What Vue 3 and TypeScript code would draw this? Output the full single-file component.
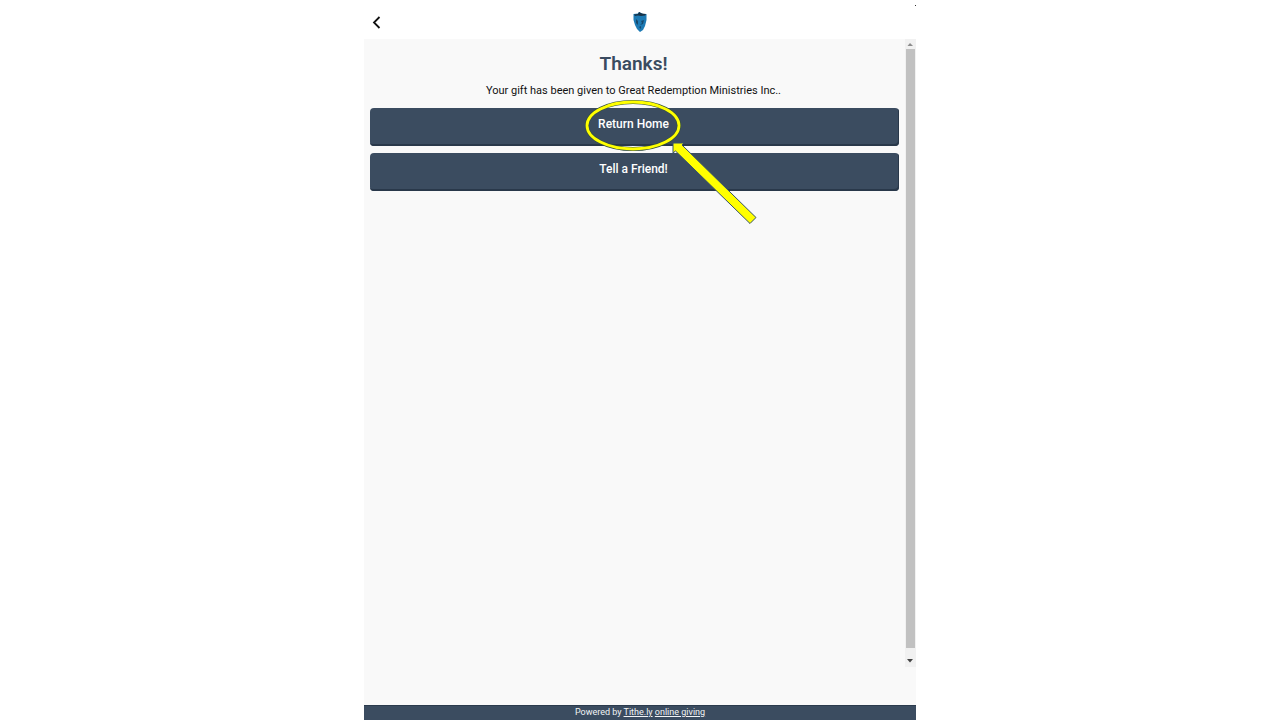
<script setup lang="ts">
const recipient: string = 'Great Redemption Ministries Inc.'
</script>

<template>
  <div class="panel">
    <header class="topbar">
      <button class="back" type="button" aria-label="Back">
        <svg width="10" height="14" viewBox="0 0 10 14"><path d="M7.500 2 L2 7.500 L7.500 13" fill="none" stroke="#111" stroke-width="1.800" /></svg>
      </button>
      <svg class="logo" width="14" height="20" viewBox="0 0 14 20">
        <path d="M0.500 2 L5 1.500 L6 0 L8 1 L10 2 L13.500 2 L13.500 8 L12 14 L10 18 L7 20 L4 17 L2 13 L0.500 8 Z" fill="#1d7ab4" />
        <path d="M1 2.500 L5 2 L6 0 L9 1.500 L13 2 L12 3.500 L8 4 L5 3.500 L2 4 Z" fill="#173348" />
        <path d="M3 7 L5 9 L5 13 L3 11 Z M8 9 L11 8 L10 12 L7 13 L9 11 Z M6 15 L8 14 L8 17 Z" fill="#17496d" />
      </svg>
      <i class="speck"></i>
    </header>

    <div class="body">
      <main class="content">
        <h1>Thanks!</h1>
        <p>Your gift has been given to {{ recipient }}.</p>
        <div class="highlighted">
          <button class="action" type="button">Return Home</button>
          <svg class="marker" width="172" height="128" viewBox="0 0 172 128" aria-hidden="true">
            <ellipse cx="49" cy="25.500" rx="46" ry="23.500" fill="none" stroke="#34503c" stroke-width="4" />
            <ellipse cx="49" cy="25.500" rx="46" ry="23.500" fill="none" stroke="#ffff00" stroke-width="2.800" />
            <path d="M89 43 L100 43 L98 45 L172 117.500 L166 123.500 L91.500 51 L89 53 Z" fill="#ffff00" stroke="#34506c" stroke-width="1" />
          </svg>
        </div>
        <button class="action" type="button">Tell a Friend!</button>
      </main>
      <div class="scroll" aria-hidden="true">
        <svg width="11" height="10" viewBox="0 0 11 10"><path d="M2.500 7 L5 4 L8 7 Z" fill="#8c8c8c" /></svg>
        <div class="thumb"></div>
        <svg width="11" height="19" viewBox="0 0 11 19"><path d="M2 11 L5 14.500 L8 11 Z" fill="#444" /></svg>
      </div>
    </div>

    <footer>Powered by <a href="#">Tithe.ly</a> <a href="#">online giving</a></footer>
  </div>
</template>

<style>
body {
  margin: 0;
  background: #fff;
}
</style>

<style scoped>
.panel {
  display: flex;
  flex-direction: column;
  max-width: 552px;
  min-height: 100vh;
  margin: 0 auto;
  background: #f9f9f9;
  font-family: Roboto, "Liberation Sans", sans-serif;
  box-sizing: border-box;
}
.topbar {
  position: relative;
  display: grid;
  grid-template-columns: 1fr auto 1fr;
  align-items: center;
  height: 39px;
  padding-top: 5px;
  box-sizing: border-box;
  background: #fff;
}
.back {
  justify-self: start;
  display: flex;
  margin-left: 8px;
  padding: 0;
  border: 0;
  background: none;
}
.speck {
  position: absolute;
  top: 5px;
  right: 0;
  width: 1px;
  height: 1px;
  background: #333;
}
.body {
  flex: 1;
  display: flex;
  margin-bottom: 38px;
}
.content {
  flex: 1;
  display: flex;
  flex-direction: column;
  padding: 12px 6px 0;
  text-align: center;
}
h1 {
  margin: 0 2px 0 0;
  font-size: 19px;
  line-height: 26px;
  font-weight: 600;
  color: #3a4b60;
}
p {
  margin: 4px 2px 7px 0;
  font-size: 11px;
  line-height: 20px;
  color: #111;
}
.highlighted {
  position: relative;
  margin-bottom: 7px;
}
.action {
  display: block;
  width: 100%;
  height: 38px;
  padding: 0 2px 6px 0;
  border: 0;
  border-radius: 4px;
  background: #3b4c60;
  box-shadow: inset -1px -2px 0 #29384a;
  color: #fff;
  font: 500 12px/20px Roboto, "Liberation Sans", sans-serif;
}
.marker {
  position: absolute;
  top: -8px;
  left: calc(50% - 51px);
  overflow: visible;
  pointer-events: none;
}
.scroll {
  display: flex;
  flex-direction: column;
  align-items: center;
  width: 11px;
  background: #f1f1f1;
}
.thumb {
  flex: 1;
  width: 9px;
  background: #c1c1c1;
}
footer {
  height: 15px;
  border-top: 1px solid #2b3b4d;
  box-sizing: border-box;
  background: #3b4c60;
  color: #f2f4f6;
  font-size: 9px;
  line-height: 13px;
  text-align: center;
}
a {
  color: inherit;
}
</style>
